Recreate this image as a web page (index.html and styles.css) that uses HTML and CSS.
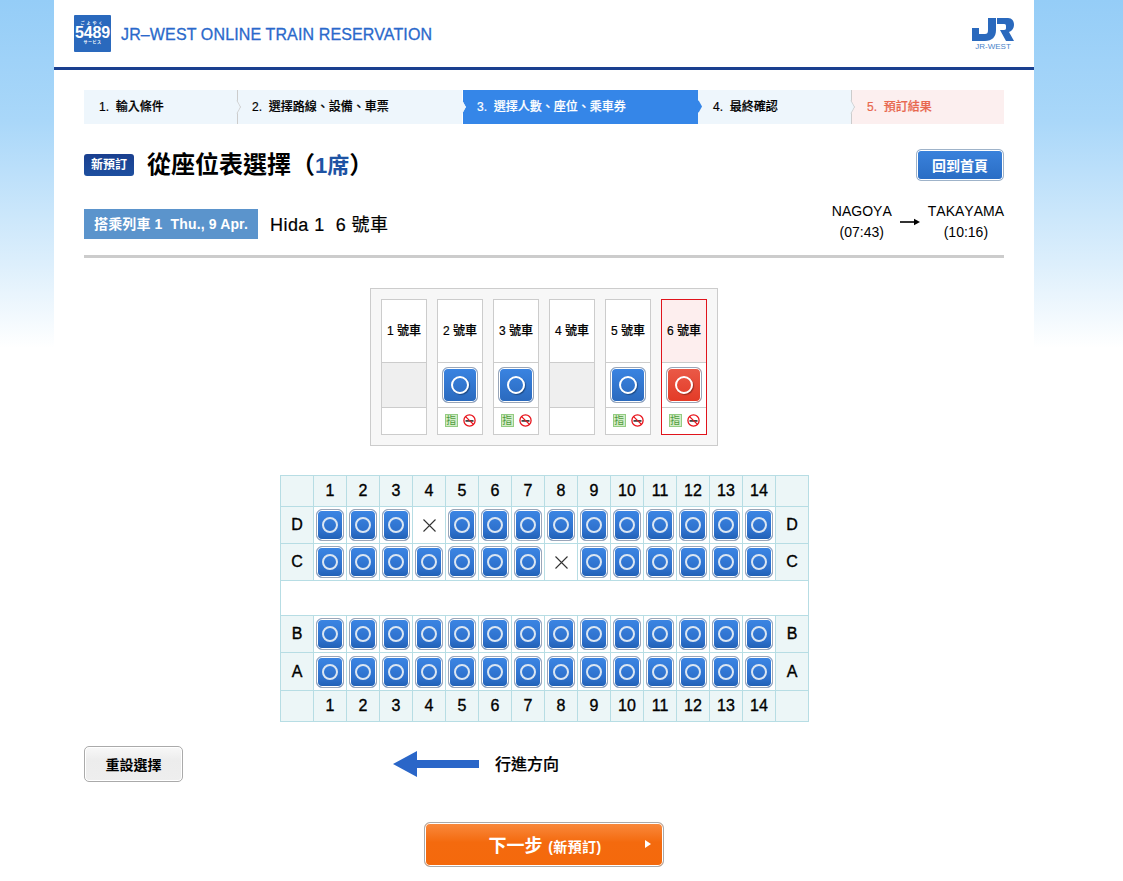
FILE: index.html
```html
<!DOCTYPE html>
<html lang="zh-Hant">
<head>
<meta charset="utf-8">
<title>JR-WEST ONLINE TRAIN RESERVATION</title>
<link rel="stylesheet" href="styles.css">
</head>
<body>
<div class="page">
  <header class="header">
    <div class="brand">
      <div class="logo5489"><span class="logo-kana">ごよやく</span><span class="logo-num">5489</span><span class="logo-sub">サービス</span></div>
      <span class="brand-title">JR–WEST ONLINE TRAIN RESERVATION</span>
    </div>
    <div class="jr">
      <svg class="jr-mark" width="42" height="23" viewBox="0 0 42 23"><path fill="#2a69bd" d="M16 0h8v12c0 7-4 11-11 11H0V10h7v6h6c2 0 3-1 3-4zM25 0h11c4 0 6 3 6 7 0 3-2 6-5 7l5 9h-8l-6-11h4c2 0 2-1 2-3 0-2 0-3-2-3h-7z"/></svg>
      <span class="jr-text">JR-WEST</span>
    </div>
  </header>

  <main class="content">
    <ol class="steps">
      <li class="step s1">1.&nbsp; 輸入條件</li>
      <li class="step s2">2.&nbsp; 選擇路線、設備、車票</li>
      <li class="step s3">3.&nbsp; 選擇人數、座位、乘車券</li>
      <li class="step s4">4.&nbsp; 最終確認</li>
      <li class="step s5">5.&nbsp; 預訂結果</li>
    </ol>

    <div class="title-row">
      <div class="title-left">
        <span class="badge">新預訂</span>
        <h1 class="title">從座位表選擇（<em class="title-em">1席</em>）</h1>
      </div>
      <button class="btn-home">回到首頁</button>
    </div>

    <div class="train-row">
      <div class="train-left">
        <span class="train-label">搭乘列車 1&nbsp; Thu., 9 Apr.</span>
        <span class="train-name">Hida 1&nbsp; 6 號車</span>
      </div>
      <div class="route">
        <div class="station">NAGOYA<br>(07:43)</div>
        <svg class="route-arrow" width="20" height="8" viewBox="0 0 20 8"><path d="M0 4h15" stroke="#000" stroke-width="1.6"/><path d="M14 0.8 20 4l-6 3.2z" fill="#000"/></svg>
        <div class="station">TAKAYAMA<br>(10:16)</div>
      </div>
    </div>

    <div class="cars-wrap">
      <div class="cars">
        <div class="car">
          <div class="car-name">1 號車</div><div class="car-seat car-seat-off"></div><div class="car-icons"></div>
        </div>
        <div class="car">
          <div class="car-name">2 號車</div><div class="car-seat"><span class="seat-lg"></span></div>
          <div class="car-icons"><span class="ic-res">指</span><svg class="ic-ns" width="13" height="13" viewBox="0 0 13 13"><circle cx="6.5" cy="6.5" r="5.6" fill="#fff" stroke="#e8141c" stroke-width="1.3"/><rect x="2.5" y="6" width="8" height="1.8" fill="#444"/><path d="M2.6 2.6l7.8 7.8" stroke="#e8141c" stroke-width="1.3"/></svg></div>
        </div>
        <div class="car">
          <div class="car-name">3 號車</div><div class="car-seat"><span class="seat-lg"></span></div>
          <div class="car-icons"><span class="ic-res">指</span><svg class="ic-ns" width="13" height="13" viewBox="0 0 13 13"><circle cx="6.5" cy="6.5" r="5.6" fill="#fff" stroke="#e8141c" stroke-width="1.3"/><rect x="2.5" y="6" width="8" height="1.8" fill="#444"/><path d="M2.6 2.6l7.8 7.8" stroke="#e8141c" stroke-width="1.3"/></svg></div>
        </div>
        <div class="car">
          <div class="car-name">4 號車</div><div class="car-seat car-seat-off"></div><div class="car-icons"></div>
        </div>
        <div class="car">
          <div class="car-name">5 號車</div><div class="car-seat"><span class="seat-lg"></span></div>
          <div class="car-icons"><span class="ic-res">指</span><svg class="ic-ns" width="13" height="13" viewBox="0 0 13 13"><circle cx="6.5" cy="6.5" r="5.6" fill="#fff" stroke="#e8141c" stroke-width="1.3"/><rect x="2.5" y="6" width="8" height="1.8" fill="#444"/><path d="M2.6 2.6l7.8 7.8" stroke="#e8141c" stroke-width="1.3"/></svg></div>
        </div>
        <div class="car car-active">
          <div class="car-name">6 號車</div><div class="car-seat"><span class="seat-lg seat-red"></span></div>
          <div class="car-icons"><span class="ic-res">指</span><svg class="ic-ns" width="13" height="13" viewBox="0 0 13 13"><circle cx="6.5" cy="6.5" r="5.6" fill="#fff" stroke="#e8141c" stroke-width="1.3"/><rect x="2.5" y="6" width="8" height="1.8" fill="#444"/><path d="M2.6 2.6l7.8 7.8" stroke="#e8141c" stroke-width="1.3"/></svg></div>
        </div>
      </div>
    </div>

    <table class="seatmap">
      <tr class="r-head"><th></th><th>1</th><th>2</th><th>3</th><th>4</th><th>5</th><th>6</th><th>7</th><th>8</th><th>9</th><th>10</th><th>11</th><th>12</th><th>13</th><th>14</th><th></th></tr>
      <tr class="r-d"><th>D</th><td><i class="seat"></i></td><td><i class="seat"></i></td><td><i class="seat"></i></td><td class="na"><svg class="cross" width="13" height="13" viewBox="0 0 13 13"><path d="M.5.5l12 12M12.5.5l-12 12" stroke="#333" stroke-width="1.1"/></svg></td><td><i class="seat"></i></td><td><i class="seat"></i></td><td><i class="seat"></i></td><td><i class="seat"></i></td><td><i class="seat"></i></td><td><i class="seat"></i></td><td><i class="seat"></i></td><td><i class="seat"></i></td><td><i class="seat"></i></td><td><i class="seat"></i></td><th>D</th></tr>
      <tr class="r-c"><th>C</th><td><i class="seat"></i></td><td><i class="seat"></i></td><td><i class="seat"></i></td><td><i class="seat"></i></td><td><i class="seat"></i></td><td><i class="seat"></i></td><td><i class="seat"></i></td><td class="na"><svg class="cross" width="13" height="13" viewBox="0 0 13 13"><path d="M.5.5l12 12M12.5.5l-12 12" stroke="#333" stroke-width="1.1"/></svg></td><td><i class="seat"></i></td><td><i class="seat"></i></td><td><i class="seat"></i></td><td><i class="seat"></i></td><td><i class="seat"></i></td><td><i class="seat"></i></td><th>C</th></tr>
      <tr class="r-aisle"><td colspan="16"></td></tr>
      <tr class="r-b"><th>B</th><td><i class="seat"></i></td><td><i class="seat"></i></td><td><i class="seat"></i></td><td><i class="seat"></i></td><td><i class="seat"></i></td><td><i class="seat"></i></td><td><i class="seat"></i></td><td><i class="seat"></i></td><td><i class="seat"></i></td><td><i class="seat"></i></td><td><i class="seat"></i></td><td><i class="seat"></i></td><td><i class="seat"></i></td><td><i class="seat"></i></td><th>B</th></tr>
      <tr class="r-a"><th>A</th><td><i class="seat"></i></td><td><i class="seat"></i></td><td><i class="seat"></i></td><td><i class="seat"></i></td><td><i class="seat"></i></td><td><i class="seat"></i></td><td><i class="seat"></i></td><td><i class="seat"></i></td><td><i class="seat"></i></td><td><i class="seat"></i></td><td><i class="seat"></i></td><td><i class="seat"></i></td><td><i class="seat"></i></td><td><i class="seat"></i></td><th>A</th></tr>
      <tr class="r-foot"><th></th><th>1</th><th>2</th><th>3</th><th>4</th><th>5</th><th>6</th><th>7</th><th>8</th><th>9</th><th>10</th><th>11</th><th>12</th><th>13</th><th>14</th><th></th></tr>
    </table>

    <div class="direction-row">
      <button class="btn-reset">重設選擇</button>
      <div class="direction">
        <svg width="86" height="26" viewBox="0 0 86 26"><path fill="#2a66c8" d="M0 13 24 0v9h62v8H24v9z"/></svg>
        <span class="direction-text">行進方向</span>
      </div>
    </div>

    <div class="next-row">
      <button class="btn-next"><span class="next-main">下一步</span> <span class="next-sub">(新預訂)</span><span class="next-tri"></span></button>
    </div>
  </main>
</div>
</body>
</html>
```

FILE: styles.css
```css
* { box-sizing: border-box; }
html, body { margin: 0; padding: 0; }
body {
  background: #fff linear-gradient(180deg, #95cdf7 0, #a9d7f9 120px, #ddeffc 265px, #fff 348px) no-repeat;
  background-size: 100% 348px;
  font-family: "Liberation Sans", "Noto Sans CJK TC", sans-serif;
  color: #000;
}
.page { width: 980px; height: 881px; margin-left: 54px; background: #fff; overflow: hidden; }

.header {
  height: 70px;
  border-bottom: 3px solid #1a3f8f;
  padding: 15px 20px 0;
  display: flex;
  justify-content: space-between;
  align-items: flex-start;
}
.brand { display: flex; align-items: center; gap: 10px; height: 37px; }
.logo5489 {
  width: 37px; height: 37px;
  background: #2a69bd;
  border-radius: 1px;
  color: #fff;
  display: flex; flex-direction: column; align-items: center; justify-content: center;
  font-weight: 700;
  overflow: visible;
}
.logo-kana { font-size: 4px; line-height: 5px; letter-spacing: 2px; }
.logo-num { font-size: 16px; line-height: 14px; letter-spacing: -0.2px; white-space: nowrap; }
.logo-sub { font-size: 4px; line-height: 6px; letter-spacing: .5px; }
.brand-title { font-size: 16px; line-height: 20px; margin-top: 2px; color: #2a69cb; white-space: nowrap; letter-spacing: .13px; -webkit-text-stroke: 0.3px #2a69cb; }
.jr { width: 42px; margin: 3px 0 0; display: flex; flex-direction: column; align-items: center; }
.jr-mark { display: block; }
.jr-text { font-size: 8px; line-height: 8px; margin-top: 2px; color: #4a83c9; white-space: nowrap; }

.content { padding: 20px 30px 0; }

.steps {
  list-style: none; margin: 0; padding: 0;
  display: flex; height: 34px;
}
.step {
  position: relative;
  font-size: 12px; font-weight: 500; line-height: 34px;
  padding-left: 15px;
  background: #eef6fc;
  white-space: nowrap;
  -webkit-text-stroke: 0.2px currentColor;
}
.s1 { width: 154px; border-right: 1px solid #ccc; }
.s2 { width: 225px; border-right: 1px solid #fff; padding-left: 14px; }
.s3 { width: 235px; background: #3586e8; color: #fff; padding-left: 14px; }
.s4 { width: 154px; border-right: 1px solid #ccc; }
.s5 { width: 152px; background: #fcefef; color: #e8674e; }
.s1::after, .s2::after, .s4::after {
  content: ""; position: absolute; z-index: 2;
  right: -5px; top: 12px;
  width: 9px; height: 9px;
  background: #eef6fc;
  border-top: 1px solid #ccc; border-right: 1px solid #ccc;
  transform: scaleX(.55) rotate(45deg);
}
.s2::after { border-color: #eef6fc; }
.s3::after {
  content: ""; position: absolute; z-index: 2;
  right: -5px; top: 12px;
  width: 9px; height: 9px;
  background: #3586e8;
  transform: scaleX(.55) rotate(45deg);
}

.title-row {
  display: flex; justify-content: space-between; align-items: center;
  margin-top: 26px; height: 30px;
}
.title-left { display: flex; align-items: center; gap: 13px; }
.badge {
  width: 50px; height: 22px;
  background: linear-gradient(#1a3f8f, #1d4f9f);
  border-radius: 3px; color: #fff;
  font-size: 12px; font-weight: 700; line-height: 22px; text-align: center;
}
.title { margin: 0; font-size: 24px; font-weight: 700; line-height: 30px; white-space: nowrap; }
.title-em { font-style: normal; font-size: 22px; color: #1e53a3; }
.btn-home {
  width: 88px; height: 32px; padding: 0;
  border: 1px solid #9fb3c9; border-radius: 5px;
  box-shadow: inset 0 0 0 1px #fff;
  background: linear-gradient(#3a82dc, #2a6dc4);
  color: #fff; font: 700 14px "Liberation Sans", "Noto Sans CJK TC", sans-serif;
}

.train-row {
  display: flex; justify-content: space-between; align-items: flex-start;
  border-bottom: 3px solid #ccc;
  box-sizing: content-box;
  height: 52px; margin-top: 23px;
}
.train-left { display: flex; align-items: center; gap: 12px; margin-top: 5px; }
.train-label {
  width: 174px; height: 30px; padding-left: 10px;
  background: #5b94cc; color: #fff;
  font-size: 14px; font-weight: 700; line-height: 30px; white-space: nowrap; letter-spacing: .14px;
}
.train-name { font-size: 18px; line-height: 30px; margin-top: 2px; white-space: nowrap; letter-spacing: .45px; -webkit-text-stroke: 0.2px #000; }
.route { display: flex; align-items: center; font-size: 14px; line-height: 21px; text-align: center; margin-top: -2px; font-kerning: none; }
.route-arrow { margin: 0 8px; }
.station { white-space: nowrap; }

.cars-wrap { display: flex; justify-content: center; margin-top: 30px; }
.cars {
  width: 348px; height: 158px;
  padding: 10px;
  display: flex; gap: 10px;
  background: #f7f7f7; border: 1px solid #ccc;
}
.car { width: 46px; height: 136px; border: 1px solid #ccc; background: #fff; display: flex; flex-direction: column; }
.car-name { height: 62px; font-size: 12px; font-weight: 500; line-height: 62px; text-align: center; white-space: nowrap; -webkit-text-stroke: 0.2px #000; }
.car-seat { height: 46px; border-top: 1px solid #ccc; border-bottom: 1px solid #ccc; display: flex; align-items: center; justify-content: center; }
.car-seat-off { background: #efefef; }
.car-icons { flex: 1; display: flex; align-items: center; justify-content: center; gap: 5px; padding-bottom: 1px; }
.car-active { border-color: #e0141c; }
.car-active .car-name { background: #fdeeee; }

.seat-lg, .seat {
  display: flex; align-items: center; justify-content: center;
  border-radius: 6px;
  border: 1px solid #9aa6b8;
  box-shadow: inset 0 0 0 1px #fff;
}
.seat-lg { width: 36px; height: 36px; background: linear-gradient(#3a84e2, #2a69bd); }
.seat-lg::after {
  content: ""; width: 14px; height: 14px; border-radius: 50%;
  border: 2px solid #fff;
  box-shadow: 1px 1px 1px rgba(0,0,0,.35);
}
.seat-red { background: linear-gradient(#ea5a48, #e33a26); }
.ic-res {
  width: 13px; height: 13px;
  background: #d4ecc7; border: 1px solid #93cc83;
  color: #4d9c3c; font-size: 10px; line-height: 11px; text-align: center;
}
.ic-ns { display: block; }

.seatmap {
  border-collapse: collapse; table-layout: fixed;
  width: 529px; margin: 29px 0 0 196px;
}
.seatmap th, .seatmap td {
  border: 1px solid #b7dde4; padding: 0; text-align: center;
  width: 33px;
  font-size: 16px;
}
.seatmap th { background: #ecf6f7; font-weight: 400; -webkit-text-stroke: 0.35px #000; }
.r-head, .r-foot { height: 31px; }
.r-d, .r-c, .r-b { height: 37px; }
.r-a { height: 38px; }
.r-aisle { height: 35px; }
.seatmap .na { line-height: 0; }
.cross { display: inline-block; }
.seat {
  width: 28px; height: 32px; margin: 0 auto;
  background: linear-gradient(#3c86e4, #2d70cc 70%, #2160b4);
}
.seat::after {
  content: ""; width: 12px; height: 12px; border-radius: 50%;
  border: 2px solid #dbe6f2;
}

.direction-row { display: flex; align-items: center; margin-top: 24px; height: 36px; }
.btn-reset {
  width: 99px; height: 36px; padding: 0;
  border: 1px solid #aaa; border-radius: 5px;
  background: linear-gradient(#f8f8f8, #ececec 40%, #eee);
  box-shadow: inset 0 0 0 1px #fff;
  color: #000; font: 700 14px "Liberation Sans", "Noto Sans CJK TC", sans-serif;
}
.direction { display: flex; align-items: center; gap: 16px; margin-left: 210px; }
.direction svg { display: block; }
.direction-text { font-size: 16px; font-weight: 500; line-height: 20px; margin-top: 2px; white-space: nowrap; -webkit-text-stroke: 0.2px #000; }

.next-row { display: flex; justify-content: center; margin-top: 40px; }
.btn-next {
  position: relative;
  width: 240px; height: 45px; padding: 0 0 2px 2px;
  border: 1px solid #aaa; border-radius: 6px;
  box-shadow: inset 0 0 0 1px #fff;
  background: linear-gradient(#f98a3e, #f46a0e 45%, #f4690c);
  color: #fff; font-family: "Liberation Sans", "Noto Sans CJK TC", sans-serif; font-weight: 700;
}
.next-main { font-size: 18px; }
.next-sub { font-size: 14px; margin-left: 2px; letter-spacing: .4px; }
.next-tri {
  position: absolute; right: 12px; top: 17px;
  border-left: 6px solid #fff; border-top: 4px solid transparent; border-bottom: 4px solid transparent;
}
```
